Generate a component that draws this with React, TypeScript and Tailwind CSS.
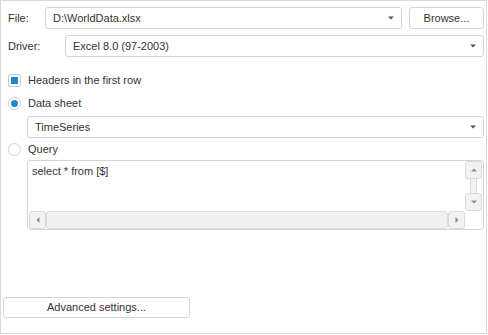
import React from "react";

const font = { fontFamily: '"Liberation Sans", Arial, sans-serif' };

function DownArrow({ color = "#555" }: { color?: string }) {
  return (
    <svg width="6" height="4" viewBox="0 0 6 4" className="block">
      <path d="M0 0.5 H6 L3 3.5 Z" fill={color} />
    </svg>
  );
}

function Combo({ value, className = "" }: { value: string; className?: string }) {
  return (
    <div
      className={`h-[22px] border border-[#d4d4d4] rounded-[3px] bg-white flex items-center pl-[7px] pr-[7px] ${className}`}
    >
      <span className="flex-1 text-[11px] text-[#333] leading-none">{value}</span>
      <DownArrow />
    </div>
  );
}

function ScrollBtn({ dir }: { dir: "up" | "down" | "left" | "right" }) {
  const paths: Record<string, string> = {
    up: "M0 3.5 H6 L3 0.5 Z",
    down: "M0 0.5 H6 L3 3.5 Z",
    left: "M3.5 0 V6 L0.5 3 Z",
    right: "M0.5 0 V6 L3.5 3 Z",
  };
  const vert = dir === "up" || dir === "down";
  return (
    <div className="w-[17px] h-[18px] border border-[#d9d9d9] rounded-[3px] bg-[#f2f2f2] flex items-center justify-center shrink-0">
      <svg width={vert ? 6 : 4} height={vert ? 4 : 6} viewBox={vert ? "0 0 6 4" : "0 0 4 6"} className="block">
        <path d={paths[dir]} fill="#8a8a8a" />
      </svg>
    </div>
  );
}

export default function App() {
  return (
    <div
      className="w-[487px] h-[334px] border border-[#d9d9d9] bg-white flex flex-col text-[11px] text-[#333]"
      style={font}
    >
      {/* File row */}
      <div className="flex items-center mt-[6px] pl-[7px] pr-[2px]">
        <span className="w-[37px]">File:</span>
        <Combo value="D:\WorldData.xlsx" className="w-[357px]" />
        <div className="ml-[7px] w-[75px] h-[22px] border border-[#d4d4d4] rounded-[3px] bg-white flex items-center justify-center">
          Browse...
        </div>
      </div>

      {/* Driver row */}
      <div className="flex items-center mt-[6px] pl-[7px] pr-[2px]">
        <span className="w-[57px]">Driver:</span>
        <Combo value="Excel 8.0 (97-2003)" className="flex-1" />
      </div>

      {/* Checkbox */}
      <div className="flex items-center mt-[16px] pl-[7px] h-[14px]">
        <div className="w-[13px] h-[13px] border border-[#c9c9c9] rounded-[2px] bg-white flex items-center justify-center">
          <div className="w-[7px] h-[7px] bg-[#1e87d0]" />
        </div>
        <span className="ml-[7px]">Headers in the first row</span>
      </div>

      {/* Data sheet radio */}
      <div className="flex items-center mt-[9px] pl-[7px] h-[14px]">
        <div className="w-[13px] h-[13px] border border-[#cfcfcf] rounded-full bg-white flex items-center justify-center">
          <div className="w-[7px] h-[7px] rounded-full bg-[#1e87d0]" />
        </div>
        <span className="ml-[7px]">Data sheet</span>
      </div>

      <div className="pl-[26px] pr-[2px] mt-[6px]">
        <Combo value="TimeSeries" />
      </div>

      {/* Query radio */}
      <div className="flex items-center mt-[4px] pl-[7px] h-[14px]">
        <div className="w-[13px] h-[13px] border border-[#d4d4d4] rounded-full bg-white" />
        <span className="ml-[7px]">Query</span>
      </div>

      {/* Query box */}
      <div className="ml-[26px] mr-[2px] mt-[4px] h-[70px] border border-[#d4d4d4] rounded-[3px] bg-white flex flex-col pl-[1px] pr-[1px]">
        <div className="flex flex-1">
          <div className="flex-1 pl-[3px] pt-[4px] leading-[13px]">select * from [$]</div>
          <div className="w-[17px] flex flex-col items-center">
            <ScrollBtn dir="up" />
            <div className="w-[7px] flex-1 border-x border-[#d9d9d9] bg-[#f2f2f2]" />
            <ScrollBtn dir="down" />
          </div>
        </div>
        <div className="flex h-[18px]">
          <ScrollBtn dir="left" />
          <div className="flex-1 border border-[#dcdcdc] rounded-[3px] bg-[#f0f0f0]" />
          <ScrollBtn dir="right" />
          <div className="w-[17px]" />
        </div>
      </div>

      <div className="flex-1" />

      {/* Advanced settings */}
      <div className="ml-[2px] mb-[15px] w-[187px] h-[21px] border border-[#d4d4d4] rounded-[3px] bg-white flex items-center justify-center">
        Advanced settings...
      </div>
    </div>
  );
}
